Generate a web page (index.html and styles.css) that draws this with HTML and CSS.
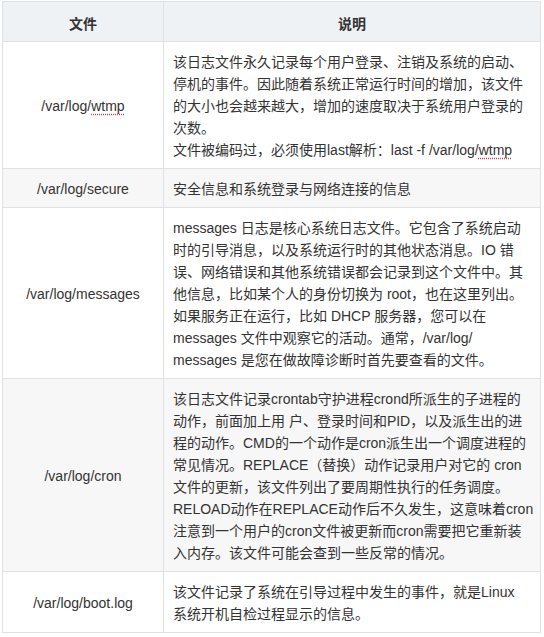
FILE: index.html
```html
<!DOCTYPE html>
<html lang="zh-CN">
<head>
    <meta charset="UTF-8">
    <meta name="viewport" content="width=device-width, initial-scale=1.0">
    <title>Linux 日志文件</title>
    <link rel="stylesheet" href="styles.css">
</head>
<body>
    <table class="log-table">
        <colgroup>
            <col class="col-file">
            <col>
        </colgroup>
        <thead>
            <tr>
                <th class="file">文件</th>
                <th>说明</th>
            </tr>
        </thead>
        <tbody>
            <tr>
                <td class="file">/var/log/<span class="spell">wtmp</span></td>
                <td>该日志文件永久记录每个用户登录、注销及系统的启动、停机的事件。因此随着系统正常运行时间的增加，该文件的大小也会越来越大，增加的速度取决于系统用户登录的次数。<br>文件被编码过，必须使用last解析：last -f /var/log/<span class="spell">wtmp</span></td>
            </tr>
            <tr>
                <td class="file">/var/log/secure</td>
                <td>安全信息和系统登录与网络连接的信息</td>
            </tr>
            <tr>
                <td class="file">/var/log/messages</td>
                <td>messages 日志是核心系统日志文件。它包含了系统启动<br>时的引导消息，以及系统运行时的其他状态消息。IO 错<br>误、网络错误和其他系统错误都会记录到这个文件中。其<br>他信息，比如某个人的身份切换为 root，也在这里列出。<br>如果服务正在运行，比如 DHCP 服务器，您可以在<br>messages 文件中观察它的活动。通常，/var/log/<br>messages 是您在做故障诊断时首先要查看的文件。</td>
            </tr>
            <tr>
                <td class="file">/var/log/cron</td>
                <td>该日志文件记录crontab守护进程crond所派生的子进程的<br>动作，前面加上用 户、登录时间和PID，以及派生出的进<br>程的动作。CMD的一个动作是cron派生出一个调度进程的<br>常见情况。REPLACE（替换）动作记录用户对它的 cron<br>文件的更新，该文件列出了要周期性执行的任务调度。<br>RELOAD动作在REPLACE动作后不久发生，这意味着cron<br>注意到一个用户的cron文件被更新而cron需要把它重新装<br>入内存。该文件可能会查到一些反常的情况。</td>
            </tr>
            <tr>
                <td class="file">/var/log/boot.log</td>
                <td>该文件记录了系统在引导过程中发生的事件，就是Linux<br>系统开机自检过程显示的信息。</td>
            </tr>
        </tbody>
    </table>
</body>
</html>
```

FILE: styles.css
```css
body {
    margin: 0;
    padding: 1px 3px 0 2px;
    background-color: #fff;
    color: #333;
    font-family: "Liberation Sans", "Noto Sans CJK SC", sans-serif;
    font-size: 14px;
}
.log-table {
    width: 100%;
    table-layout: fixed;
    border-collapse: collapse;
    line-height: 22px;
}
.col-file {
    width: 161px;
}
.log-table th,
.log-table td {
    border: 1px solid #dfe2e5;
    padding: 9px 5px 7px 9px;
    vertical-align: middle;
    text-align: left;
}
.log-table th {
    background-color: #eef2f4;
    font-weight: bold;
    text-align: center;
    padding: 11px 9px 6px;
}
.log-table tbody tr:nth-child(even) {
    background-color: #f7f7f7;
}
.log-table .file {
    text-align: center;
    padding-left: 9px;
    padding-right: 9px;
}
.spell {
    text-decoration: underline dotted #e0393e;
    text-underline-offset: 3px;
}
```
